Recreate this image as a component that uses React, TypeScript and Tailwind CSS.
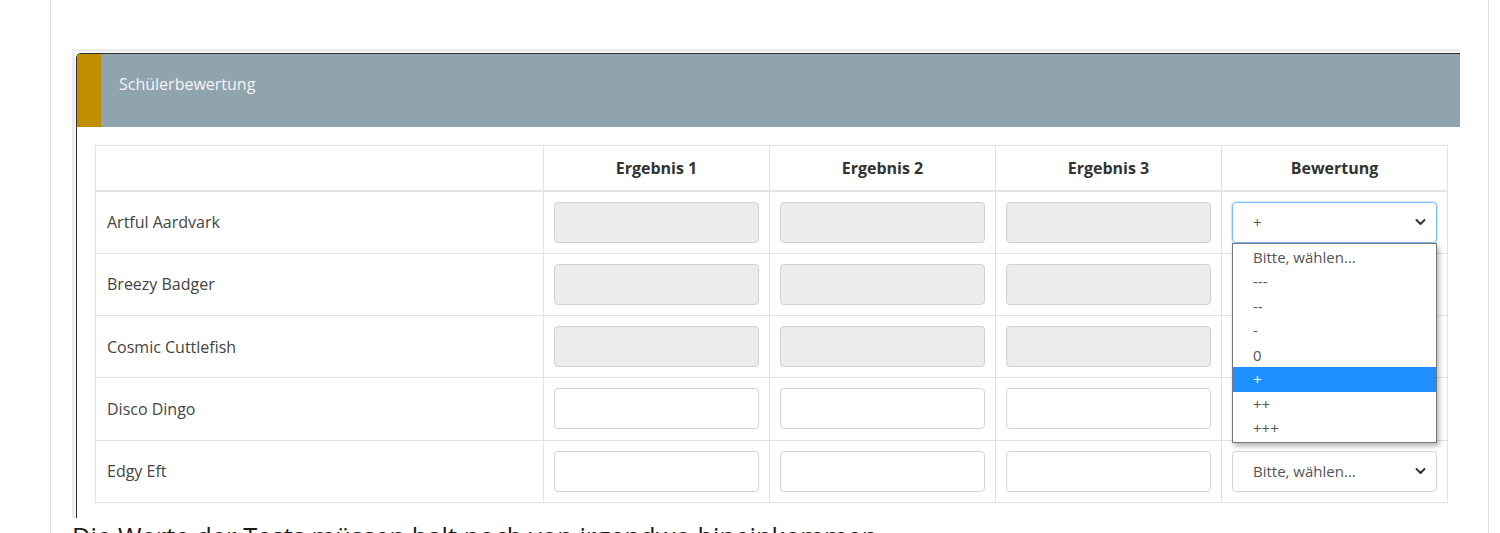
const students = [
  { name: "Artful Aardvark", locked: true, value: "+" },
  { name: "Breezy Badger", locked: true, value: "" },
  { name: "Cosmic Cuttlefish", locked: true, value: "" },
  { name: "Disco Dingo", locked: false, value: "" },
  { name: "Edgy Eft", locked: false, value: "" },
];

const options = ["Bitte, wählen...", "---", "--", "-", "0", "+", "++", "+++"];

function Chevron() {
  return (
    <svg
      className="absolute right-[10px] top-1/2 -translate-y-1/2"
      width="11"
      height="8"
      viewBox="0 0 11 8"
    >
      <polyline
        points="1.5,2 5.5,6 9.5,2"
        fill="none"
        stroke="#333"
        strokeWidth="2"
        strokeLinecap="round"
        strokeLinejoin="round"
      />
    </svg>
  );
}

function GradeSelect({
  value,
  open,
  hidden,
}: {
  readonly value: string;
  readonly open?: boolean;
  readonly hidden?: boolean;
}): React.JSX.Element {
  // rows below the open list are covered by it, so draw just the box
  if (hidden) {
    return <div className="h-[41px] rounded-[4px] border border-[#d4d4d4]" />;
  }
  return (
    <div className="relative">
      <div
        className={`relative flex h-[41px] items-center rounded-[4px] border bg-white pl-[20px] text-[15px] text-[#555] ${open ? "border-[#80bdff] shadow-[0_0_0_1px_rgba(128,189,255,0.35)]" : "border-[#d4d4d4]"}`}
      >
        {value || "Bitte, wählen..."}
        <Chevron />
      </div>
      {open ? (
        <div className="absolute left-0 top-[41px] z-10 w-full border border-[#767676] bg-white py-[1px] shadow-[2px_3px_5px_rgba(0,0,0,0.3)]">
          {options.map((o) => (
            <div
              key={o}
              className={`flex h-[24.5px] items-center pl-[20px] text-[15px] ${o === value ? "bg-[#1e90ff] text-white" : "text-[#555]"}`}
            >
              {o}
            </div>
          ))}
        </div>
      ) : null}
    </div>
  );
}

export default function App(): React.JSX.Element {
  return (
    <div className="h-[533px] overflow-hidden bg-white font-['Open_Sans',sans-serif]">
      <div className="ml-[50px] mr-[11px] h-full border-x border-[#dedede] pl-[21px] pt-[49px]">
        <div className="w-[1388px] border-l-[3px] border-t-[3px] border-[#ececec]">
          <div className="ml-[1px] mt-[1px] rounded-tl-[5px] border-l border-t border-[#2b2b2b] pb-[15px]">
            <div className="flex h-[73px] overflow-hidden rounded-tl-[4px] bg-[#90a4ae]">
              <div className="w-[24px] bg-[#c08f00]" />
              <div className="pl-[18px] pt-[18px] text-[16px] leading-[24px] text-[#f4f4f4]">
                Schülerbewertung
              </div>
            </div>
            <table className="ml-[18px] mt-[18px] w-[1352px] table-fixed border-collapse text-[16px] text-[#444]">
              <colgroup>
                <col className="w-[448px]" />
                <col className="w-[226px]" />
                <col className="w-[226px]" />
                <col className="w-[226px]" />
                <col className="w-[226px]" />
              </colgroup>
              <thead>
                <tr className="h-[45px]">
                  <th className="border border-b-2 border-[#e2e2e2]" />
                  {["Ergebnis 1", "Ergebnis 2", "Ergebnis 3", "Bewertung"].map(
                    (h) => (
                      <th
                        key={h}
                        className="border border-b-2 border-[#e2e2e2] text-center font-bold text-[#333]"
                      >
                        {h}
                      </th>
                    ),
                  )}
                </tr>
              </thead>
              <tbody>
                {students.map((s, i) => (
                  <tr key={s.name} className="h-[62.4px]">
                    <td className="border border-[#e2e2e2] pl-[11px]">
                      {s.name}
                    </td>
                    {[0, 1, 2].map((k) => (
                      <td
                        key={k}
                        className="border border-[#e2e2e2] px-[10px] py-[10px]"
                      >
                        <div
                          className={`h-[41px] rounded-[4px] border ${s.locked ? "border-[#d2d2d2] bg-[#ececec]" : "border-[#d4d4d4] bg-white"}`}
                        />
                      </td>
                    ))}
                    <td className="border border-[#e2e2e2] px-[10px] py-[10px]">
                      <GradeSelect
                        value={s.value}
                        open={i === 0}
                        hidden={i > 0 && i < 4}
                      />
                    </td>
                  </tr>
                ))}
              </tbody>
            </table>
          </div>
        </div>
        <p className="pt-[5px] text-[25.5px] leading-[26px] text-[#1a1a1a]">
          Die Werte der Tests müssen halt noch von irgendwo hineinkommen
        </p>
      </div>
    </div>
  );
}
